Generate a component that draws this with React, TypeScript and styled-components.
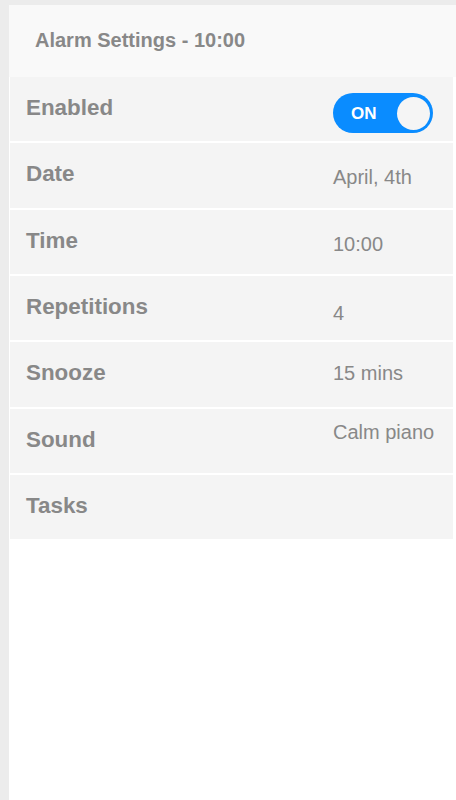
import React from "react";
import styled, { createGlobalStyle } from "styled-components";

const Global = createGlobalStyle`
  html, body { margin: 0; padding: 0; background: #ececec; }
  body { font-family: "Liberation Sans", Arial, sans-serif; }
`;

const Page = styled.div`
  padding: 5px 0 0 9px;
  min-height: 800px;
  box-sizing: border-box;
  display: flex;
`;

const Panel = styled.div`
  flex: 1;
  background: #ffffff;
  min-height: 795px;
  display: flex;
  flex-direction: column;
`;

const Header = styled.div`
  height: 72px;
  box-sizing: border-box;
  background: #f9f9f9;
  padding: 25px 0 0 26px;
  font-size: 20px;
  line-height: 20px;
  font-weight: 700;
  color: #888888;
`;

const List = styled.div`
  display: flex;
  flex-direction: column;
  gap: 2px;
  padding: 0 3px 0 1px;
`;

const Row = styled.div`
  height: 64.33px;
  box-sizing: border-box;
  background: #f4f4f4;
  display: grid;
  grid-template-columns: 1fr 100px;
  padding: 0 20px 0 16px;
`;

const Label = styled.div`
  padding-top: 20px;
  font-size: 22.4px;
  line-height: 22px;
  font-weight: 700;
  color: #888888;
`;

const Value = styled.div<{ $top: number }>`
  padding-top: ${(p) => p.$top}px;
  font-size: 20px;
  line-height: 20px;
  color: #888888;
  white-space: nowrap;
`;

const Toggle = styled.div`
  margin-top: 16px;
  width: 100px;
  height: 40px;
  box-sizing: border-box;
  border-radius: 20px;
  background: #0a8cff;
  display: flex;
  align-items: center;
  justify-content: space-between;
  padding: 0 3px 0 18px;
`;

const ToggleText = styled.span`
  color: #ffffff;
  font-weight: 700;
  font-size: 17px;
  line-height: 17px;
`;

const Knob = styled.span`
  width: 33px;
  height: 33px;
  border-radius: 50%;
  background: #f5f5f5;
`;

const rows: { label: string; value?: string; top?: number; toggle?: boolean }[] = [
  { label: "Enabled", toggle: true },
  { label: "Date", value: "April, 4th", top: 24 },
  { label: "Time", value: "10:00", top: 24 },
  { label: "Repetitions", value: "4", top: 27 },
  { label: "Snooze", value: "15 mins", top: 21 },
  { label: "Sound", value: "Calm piano", top: 13 },
  { label: "Tasks" },
];

export default function App() {
  return (
    <>
      <Global />
      <Page>
        <Panel>
          <Header>Alarm Settings - 10:00</Header>
          <List>
            {rows.map((r) => (
              <Row key={r.label}>
                <Label>{r.label}</Label>
                {r.toggle ? (
                  <Toggle>
                    <ToggleText>ON</ToggleText>
                    <Knob />
                  </Toggle>
                ) : r.value ? (
                  <Value $top={r.top ?? 24}>{r.value}</Value>
                ) : (
                  <span />
                )}
              </Row>
            ))}
          </List>
        </Panel>
      </Page>
    </>
  );
}
